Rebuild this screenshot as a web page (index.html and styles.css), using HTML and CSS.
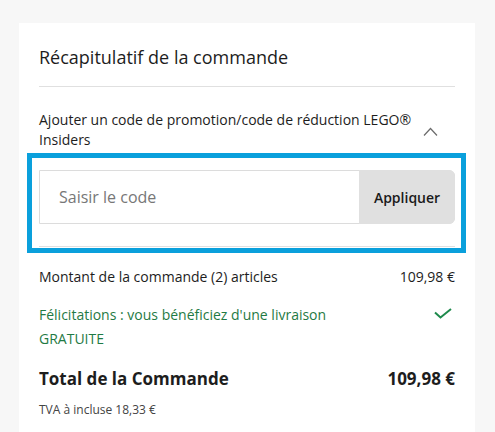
FILE: index.html
```html
<!DOCTYPE html>
<html lang="fr">
<head>
<meta charset="utf-8">
<link rel="stylesheet" href="styles.css">
</head>
<body>
<section class="card">
  <h2 class="title">Récapitulatif de la commande</h2>
  <div class="promo">
    <div class="promo-head">
      <span class="promo-label">Ajouter un code de promotion/code de réduction LEGO® Insiders</span>
      <svg class="chevron" width="15" height="9" viewBox="0 0 15 9"><path d="M1 8.5 L7.5 1.5 L14 8.5" fill="none" stroke="#6b6b6b" stroke-width="1.2"/></svg>
    </div>
    <div class="promo-form">
      <div class="code-field">
        <span class="placeholder">Saisir le code</span>
        <span class="apply">Appliquer</span>
      </div>
    </div>
  </div>
  <div class="row">
    <span>Montant de la commande (2) articles</span>
    <span>109,98 €</span>
  </div>
  <div class="row shipping">
    <span class="ship-text">Félicitations : vous bénéficiez d'une livraison GRATUITE</span>
    <svg class="check" width="18" height="11" viewBox="0 0 18 11"><path d="M1 4.5 L6.5 9.5 L17 1" fill="none" stroke="#1e8a4c" stroke-width="2"/></svg>
  </div>
  <div class="row total">
    <span>Total de la Commande</span>
    <span>109,98 €</span>
  </div>
  <p class="vat">TVA à incluse 18,33 €</p>
</section>
</body>
</html>
```
FILE: styles.css
```css
* { box-sizing: border-box; }
html, body { margin: 0; }
body {
  background: #f7f7f7;
  font-family: "Open Sans", "Liberation Sans", sans-serif;
  color: #1d1d1d;
  padding: 23px 0 0 19px;
  height: 432px;
  overflow: hidden;
}
.card {
  width: 456px;
  min-height: 420px;
  background: #fff;
  padding: 22px 20px 0;
}
.title {
  margin: 0;
  font-size: 18px;
  line-height: 24px;
  font-weight: 400;
  padding-bottom: 17px;
  border-bottom: 1px solid #e0e0e0;
}
.promo {
  position: relative;
  padding-top: 23px;
  padding-bottom: 22px;
  border-bottom: 1px solid #e0e0e0;
}
.promo-form::before {
  content: "";
  position: absolute;
  left: -12px;
  right: -11px;
  top: 66px;
  bottom: -7px;
  border: 5px solid #0aa0dc;
  pointer-events: none;
}
.promo-head {
  display: flex;
  align-items: flex-start;
  justify-content: space-between;
  font-size: 14px;
  line-height: 20px;
}
.promo-label { max-width: 385px; }
.chevron { margin: 17px 17px 0 0; flex: none; }
.promo-form { margin-top: 20px; }
.code-field {
  display: flex;
  height: 54px;
  border: 1px solid #dcdcdc;
  border-radius: 0 6px 6px 0;
}
.placeholder {
  flex: 1;
  display: flex;
  align-items: center;
  padding-left: 19px;
  font-size: 16px;
  color: #777;
}
.apply {
  width: 96px;
  margin: -1px -1px -1px 0;
  display: flex;
  align-items: center;
  justify-content: center;
  background: #e0e0e0;
  border-radius: 0 6px 6px 0;
  font-size: 14px;
  font-weight: 600;
  color: #1a1a1a;
}
.row {
  display: flex;
  justify-content: space-between;
  align-items: flex-start;
  font-size: 14px;
  line-height: 20px;
}
.promo + .row { margin-top: 20px; }
.shipping { margin-top: 16px; color: #1f7a44; line-height: 24px; }
.ship-text { max-width: 345px; }
.check { margin: 5px 3px 0 0; }
.total {
  margin-top: 16px;
  font-size: 17px;
  line-height: 24px;
  font-weight: 700;
}
.vat {
  margin: 11px 0 0;
  font-size: 12px;
  line-height: 16px;
  color: #444;
}
```
